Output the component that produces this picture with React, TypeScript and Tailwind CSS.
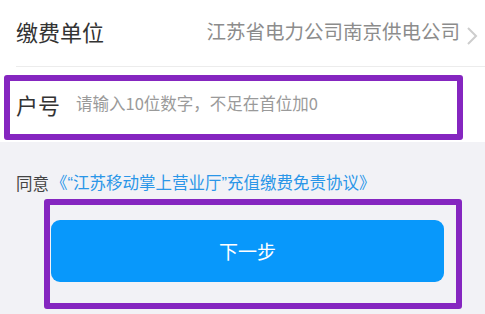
export default function App() {
  return (
    <div
      className="w-[485px] h-[314px] overflow-hidden bg-[#f2f2f6]"
      style={{ fontFamily: '"Noto Sans CJK SC", "Noto Sans", sans-serif' }}
    >
      <div className="bg-white h-[142px]">
        <div className="ml-4 h-[67px] flex items-center justify-between border-b border-[#ececec]">
          <span className="text-[22px] text-[#333] leading-none mb-[5px]">缴费单位</span>
          <div className="flex items-center">
            <span className="text-[19.5px] text-[#8c8c8c] leading-none mb-[5px]">江苏省电力公司南京供电公司</span>
            <svg width="12" height="20" viewBox="0 0 12 20" className="ml-[6px] mr-[7px] mt-[6px]">
              <path d="M2 2 L10 10 L2 18" fill="none" stroke="#cdcdcd" strokeWidth="2" />
            </svg>
          </div>
        </div>
        <div className="pt-[8px] pl-[4px]">
          <div className="w-[459px] h-[65px] border-[6px] border-[#8526c0] rounded-[3px] flex items-center pl-[6px] pb-[8px]">
            <span className="text-[22px] text-[#333] leading-none">户号</span>
            <span className="ml-[16px] text-[16.5px] text-[#9a9a9a] leading-none">请输入10位数字，不足在首位加0</span>
          </div>
        </div>
      </div>
      <div className="pl-4 mt-[32px] h-[18px] flex items-center text-[16.5px] leading-none">
        <span className="text-[#444]">同意</span>
        <span className="text-[#2a96e8] ml-[2px]">
          《<span style={{ fontFamily: '"Liberation Sans", sans-serif' }}>“</span>江苏移动掌上营业厅<span style={{ fontFamily: '"Liberation Sans", sans-serif' }}>”</span>充值缴费免责协议》
        </span>
      </div>
      <div className="ml-[44px] mt-[7px] w-[418px] h-[110px] border-[6px] border-[#8526c0] rounded-[3px] pt-[15px] pl-[1px]">
        <div className="w-[393px] h-[62px] rounded-[9px] bg-[#0898fb] flex items-center justify-center text-white text-[19px]">
          下一步
        </div>
      </div>
    </div>
  )
}
